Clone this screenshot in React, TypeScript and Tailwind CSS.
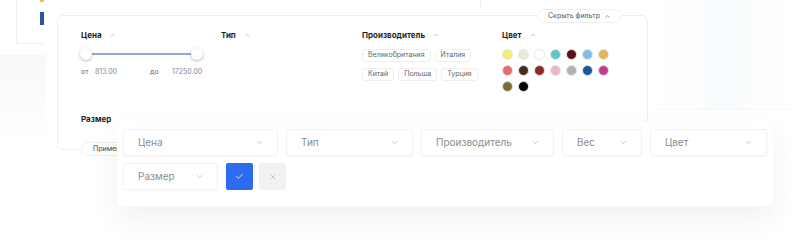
import { ChevronDown, ChevronUp, Check, X } from "lucide-react";

const colors = [
  "#f4ef6c",
  "#ede6da",
  "#ffffff",
  "#5ec6cd",
  "#5b0f1e",
  "#82bde9",
  "#e2b457",
  "#e96b6b",
  "#4a2b20",
  "#8e2b25",
  "#e9b9ca",
  "#b1b1b5",
  "#1f55a3",
  "#c13d92",
  "#7a7036",
  "#000000",
];

const brands = ["Великобритания", "Италия", "Китай", "Польша", "Турция"];

function Heading({ title }: { title: string }) {
  return (
    <div className="flex items-center gap-[7px] h-[14px] text-[8px] font-bold text-[#1f1f1f]">
      {title}
      <ChevronUp size={8} strokeWidth={1.5} className="text-[#9a9a9a]" />
    </div>
  );
}

function Select({ label, w }: { label: string; w: string }) {
  return (
    <div
      className={`${w} h-[27px] flex items-center justify-between pl-[14px] pr-[13px] border border-[#f1f1f1] rounded-[2px] shadow-[0_1px_2px_rgba(0,0,0,0.03)] text-[10px] text-[#8d8d8d]`}
    >
      <span>{label}</span>
      <ChevronDown size={9} strokeWidth={1.5} className="text-[#a5a5a5]" />
    </div>
  );
}

export default function App() {
  return (
    <div className="relative w-[800px] h-[244px] overflow-hidden bg-white font-['Inter',sans-serif]">
      {/* layers behind */}
      <div className="absolute left-[16px] top-0 w-px h-[43px] bg-[#eef0f3]" />
      <div className="absolute left-[16px] top-[43px] w-[28px] h-px bg-[#eef0f3]" />
      <div className="absolute left-[40px] top-0 w-[4px] h-[2px] bg-[#e6c25c]" />
      <div className="absolute left-[40px] top-[12px] w-[4px] h-[13px] bg-[#2557a7]" />
      <div className="absolute left-0 top-[55px] w-[46px] h-[90px] bg-gradient-to-b from-[#f6f8fa] to-white" />
      <div className="absolute left-[480px] top-0 w-px h-[8px] bg-[#eceff2]" />
      <div className="absolute left-[655px] top-0 w-[140px] h-[110px] bg-gradient-to-r from-white via-[#f8fbfd] to-white border-b border-[#f1f9fb]" />

      {/* filter panel */}
      <div className="relative ml-[57px] mt-[15px] w-[591px] h-[135px] bg-white border border-[#edf0f2] rounded-md">
        <div className="absolute right-[25px] top-[-7px] h-[14px] px-[10px] flex items-center gap-[4px] bg-white border border-[#edf0f2] rounded-full text-[7px] text-[#555]">
          Скрыть фильтр
          <ChevronUp size={7} strokeWidth={2} />
        </div>

        <div className="pt-[12px] pl-[23px] grid grid-cols-[140px_141px_140px_1fr]">
          <div>
            <Heading title="Цена" />
            <div className="relative mt-[6px] ml-[-1px] w-[123px] h-[12px]">
              <div className="absolute left-[6px] right-[6px] top-[5px] h-[1.5px] bg-[#8ea9dc]" />
              <div className="absolute left-0 top-0 w-[12px] h-[12px] rounded-full bg-white shadow-[0_1px_3px_rgba(0,0,0,0.3)]" />
              <div className="absolute right-0 top-0 w-[12px] h-[12px] rounded-full bg-white shadow-[0_1px_3px_rgba(0,0,0,0.3)]" />
            </div>
            <div className="mt-[7px] flex h-[10px] items-center text-[7px] text-[#666]">
              <span className="w-[14px]">от</span>
              <span className="w-[55px] text-[#888]">813.00</span>
              <span className="w-[22px]">до</span>
              <span className="text-[#888]">17250.00</span>
            </div>
          </div>

          <div>
            <Heading title="Тип" />
          </div>

          <div>
            <Heading title="Производитель" />
            <div className="mt-[7px] w-[124px] flex flex-wrap gap-x-[4px] gap-y-[6px]">
              {brands.map((b) => (
                <div
                  key={b}
                  className="h-[13px] px-[5px] flex items-center border border-[#eceef0] rounded-[3px] text-[7px] text-[#666]"
                >
                  {b}
                </div>
              ))}
            </div>
          </div>

          <div>
            <Heading title="Цвет" />
            <div className="mt-[7px] grid grid-cols-[repeat(7,11px)] gap-[5px]">
              {colors.map((c, i) => (
                <div
                  key={i}
                  className="w-[11px] h-[11px] rounded-full border border-[#e6e6e6]"
                  style={{ backgroundColor: c }}
                />
              ))}
            </div>
          </div>
        </div>

        <div className="mt-[20px] pl-[23px]">
          <div className="h-[14px] flex items-center text-[8px] font-bold text-[#1f1f1f]">Размер</div>
        </div>

        <div className="absolute left-[23px] bottom-[-7px] h-[14px] px-[11px] flex items-center bg-white border border-[#edf0f2] rounded-full text-[7px] text-[#444]">
          Применить
        </div>
      </div>

      {/* compact filter card */}
      <div className="absolute left-[117px] top-[122px] w-[656px] h-[84px] px-[6px] pt-[7px] bg-white rounded-sm shadow-[0_12px_28px_rgba(30,50,90,0.07)] flex flex-col gap-[7px]">
        <div className="flex gap-[8px]">
          <Select label="Цена" w="w-[155px]" />
          <Select label="Тип" w="w-[127px]" />
          <Select label="Производитель" w="w-[133px]" />
          <Select label="Вес" w="w-[80px]" />
          <Select label="Цвет" w="w-[117px]" />
        </div>
        <div className="flex gap-[8px]">
          <Select label="Размер" w="w-[95px]" />
          <div className="w-[27px] h-[27px] rounded-[2px] bg-[#2d6cf2] flex items-center justify-center">
            <Check size={9} strokeWidth={2} className="text-white" />
          </div>
          <div className="w-[27px] h-[27px] -ml-[2px] rounded-[2px] bg-[#f1f1f1] flex items-center justify-center">
            <X size={8} strokeWidth={1.5} className="text-[#9a9a9a]" />
          </div>
        </div>
      </div>
    </div>
  );
}
